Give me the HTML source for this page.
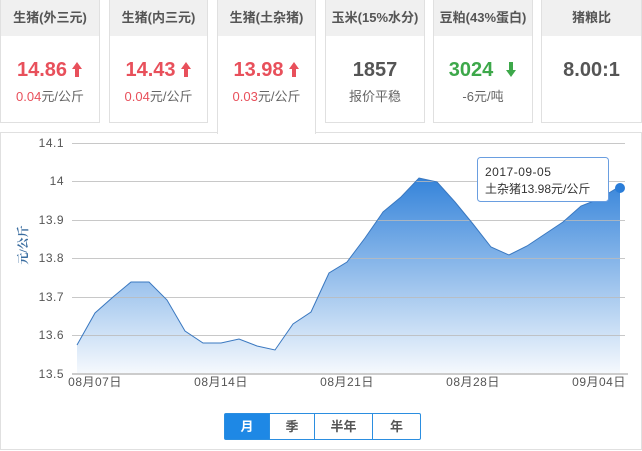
<!DOCTYPE html>
<html><head><meta charset="utf-8"><style>
body{margin:0;width:642px;height:451px;background:#fff;font-family:"Liberation Sans","Noto Sans CJK SC",sans-serif;position:relative;overflow:hidden}
.card{position:absolute;top:0;height:123px;border:1px solid #e0e0e0;border-top:none;box-sizing:border-box;background:#fff;text-align:center}
.card .h{height:36px;background:#f0f0f0;line-height:36px;font-size:13px;font-weight:bold;color:#555}
.card .v{font-size:20px;font-weight:bold;margin-top:22px;height:24px;line-height:24px}
.card .s{font-size:13px;color:#666;margin-top:4px}
.red{color:#e8505b}.green{color:#3da84a}.gray{color:#555}
.panel{position:absolute;left:0;top:132px;width:642px;height:318px;border:1px solid #e0e0e0;box-sizing:border-box}
.btns{position:absolute;left:224px;top:413px;height:27px;display:flex;border:1px solid #2b8ee0;box-sizing:border-box;border-radius:2px}
.btns div{height:25px;line-height:25px;text-align:center;font-size:13px;font-weight:bold;color:#555;border-left:1px solid #2b8ee0}
svg.a{vertical-align:-1px;margin-left:4px}
</style></head><body>
<div class="panel"></div>
<div class="card" style="left:0;width:100px"><div class="h">生猪(外三元)</div><div class="v red">14.86<svg class="a" width="12" height="16"><path d="M6,1 L11,8 H8 V16 H4 V8 H1Z" fill="#e8505b"/></svg></div><div class="s"><span class="red">0.04</span>元/公斤</div></div>
<div class="card" style="left:109px;width:99px"><div class="h">生猪(内三元)</div><div class="v red">14.43<svg class="a" width="12" height="16"><path d="M6,1 L11,8 H8 V16 H4 V8 H1Z" fill="#e8505b"/></svg></div><div class="s"><span class="red">0.04</span>元/公斤</div></div>
<div class="card" style="left:217px;width:99px;height:134px;border-bottom:none;z-index:2"><div class="h">生猪(土杂猪)</div><div class="v red">13.98<svg class="a" width="12" height="16"><path d="M6,1 L11,8 H8 V16 H4 V8 H1Z" fill="#e8505b"/></svg></div><div class="s"><span class="red">0.03</span>元/公斤</div></div>
<div class="card" style="left:325px;width:100px"><div class="h">玉米(15%水分)</div><div class="v gray">1857</div><div class="s">报价平稳</div></div>
<div class="card" style="left:433px;width:100px"><div class="h">豆粕(43%蛋白)</div><div class="v green">3024<svg class="a" style="margin-left:12px" width="12" height="16"><path d="M6,16 L11,9 H8 V1 H4 V9 H1Z" fill="#3da84a"/></svg></div><div class="s">-6元/吨</div></div>
<div class="card" style="left:541px;width:101px"><div class="h">猪粮比</div><div class="v gray">8.00:1</div></div>
<svg style="position:absolute;left:0;top:0" width="642" height="451">
<defs><linearGradient id="g" x1="0" y1="178" x2="0" y2="373" gradientUnits="userSpaceOnUse"><stop offset="0" stop-color="#2a7dd8"/><stop offset="1" stop-color="#2a7dd8" stop-opacity="0.05"/></linearGradient></defs>
<path d="M77,345 L95,313 113,297 131,282 149,282 167,300 185,331 203,343 221,343 239,339 257,346 275,350 293,324 311,312 329,273 347,262 365,238 383,212 401,197 419,178 437,182 455,202 473,224 491,247 509,255 527,246 545,234 563,222 581,206 599,199 617,188 620,188 620,373 77,373Z" fill="url(#g)" opacity="0.95"/>
<g stroke="#bbb" stroke-width="1" opacity="0.8"><line x1="72" x2="625" y1="143.5" y2="143.5"/><line x1="72" x2="625" y1="181.5" y2="181.5"/><line x1="72" x2="625" y1="220.5" y2="220.5"/><line x1="72" x2="625" y1="258.5" y2="258.5"/><line x1="72" x2="625" y1="297.5" y2="297.5"/><line x1="72" x2="625" y1="335.5" y2="335.5"/></g>
<line x1="72" x2="628" y1="374" y2="374" stroke="#ccc" stroke-width="2"/>
<path d="M77,345 L95,313 113,297 131,282 149,282 167,300 185,331 203,343 221,343 239,339 257,346 275,350 293,324 311,312 329,273 347,262 365,238 383,212 401,197 419,178 437,182 455,202 473,224 491,247 509,255 527,246 545,234 563,222 581,206 599,199 617,188" fill="none" stroke="#3a78c0" stroke-width="1"/>
<circle cx="620" cy="188" r="5" fill="#2a7dd8"/>
<g font-size="12" fill="#555" text-anchor="end" letter-spacing="0.5"><text x="64" y="147">14.1</text><text x="64" y="185">14</text><text x="64" y="224">13.9</text><text x="64" y="262">13.8</text><text x="64" y="301">13.7</text><text x="64" y="339">13.6</text><text x="64" y="378">13.5</text></g>
<g font-size="12" fill="#555" text-anchor="middle" letter-spacing="0.5"><text x="95" y="386">08月07日</text><text x="221" y="386">08月14日</text><text x="347" y="386">08月21日</text><text x="473" y="386">08月28日</text><text x="599" y="386">09月04日</text></g>
<text transform="translate(27,245) rotate(-90)" font-size="12" fill="#3a6da0" text-anchor="middle" font-family="Liberation Serif,Noto Serif CJK SC,serif" font-weight="bold">元/公斤</text>
<rect x="477.5" y="157.5" width="131" height="44" rx="3" fill="#fff" stroke="#6a9ee0"/>
<text x="485" y="176" font-size="12" fill="#333" letter-spacing="0.5">2017-09-05</text>
<text x="485" y="193" font-size="12" fill="#333">土杂猪13.98元/公斤</text>
</svg>
<div class="btns"><div style="width:44px;background:#1e88e5;color:#fff;border-left:none">月</div><div style="width:44px">季</div><div style="width:57px">半年</div><div style="width:47px">年</div></div>
</body></html>
